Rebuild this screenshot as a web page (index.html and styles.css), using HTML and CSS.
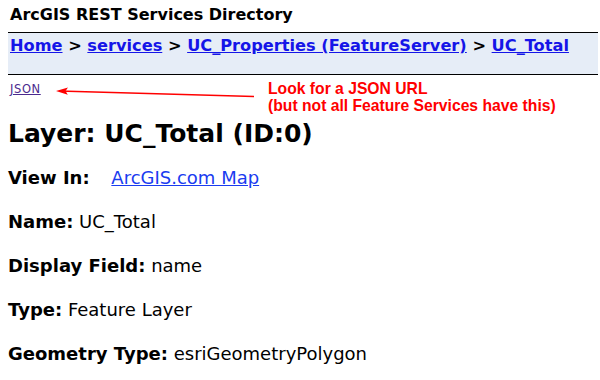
FILE: index.html
```html
<!DOCTYPE html>
<html lang="en">
<head>
  <meta charset="UTF-8">
  <title>Layer: UC_Total (ID:0)</title>
  <link rel="stylesheet" href="styles.css">
</head>
<body>
  <div class="titlebar">ArcGIS REST Services Directory</div>

  <!-- breadcrumbs -->
  <div class="breadcrumbs">
    <a href="#">Home</a> &gt; <a href="#">services</a> &gt; <a href="#">UC_Properties (FeatureServer)</a> &gt; <a href="#">UC_Total</a>
  </div>

  <div class="formats">
    <a class="json" href="#">JSON</a>
    <!-- annotation -->
    <div class="callout">
      <svg class="arrow" width="198" height="14" viewBox="0 0 198 14">
        <line x1="3" y1="4" x2="198" y2="9.5" stroke="#f00" stroke-width="1.3"/>
        <path d="M0 4 L12 0.6 L9.5 4.1 L11.8 7.8 Z" fill="#f00"/>
      </svg>
      <div class="note">Look for a JSON URL<br>(but not all Feature Services have this)</div>
    </div>
  </div>

  <h2>Layer: UC_Total (ID:0)</h2>

  <div class="rbody">
    <p><b>View In:</b> <a class="viewer" href="#">ArcGIS.com Map</a></p>
    <p><b>Name:</b> UC_Total</p>
    <p><b>Display Field:</b> name</p>
    <p><b>Type:</b> Feature Layer</p>
    <p><b>Geometry Type:</b> esriGeometryPolygon</p>
  </div>
</body>
</html>
```

FILE: styles.css
```css
body {
  margin: 0;
  padding: 0 2px 0 8px;
  background-color: #FFF;
  color: #000;
  font-family: "DejaVu Sans", Verdana, sans-serif;
}

a {
  color: #0000EE;
}

.titlebar {
  height: 32px;
  padding-left: 2px;
  font-size: 16px;
  font-weight: bold;
  line-height: 30px;
}

.breadcrumbs {
  height: 43px;
  padding: 3px 2px 0;
  box-sizing: border-box;
  border-top: 1px solid #000;
  border-bottom: 1px solid #000;
  background-color: #E6EDF7;
  font-size: 16.2px;
  font-weight: bold;
  line-height: 20px;
}

.breadcrumbs a {
  color: #1515E8;
}

.formats {
  position: relative;
  height: 28px;
  padding-left: 2px;
}

.json {
  font-size: 11.5px;
  letter-spacing: 0.6px;
  line-height: 28px;
  color: #4B2A8E;
}

.callout {
  position: absolute;
  left: 48px;
  top: 5px;
  display: flex;
  align-items: flex-start;
}

.arrow {
  margin-top: 7px;
  overflow: visible;
}

.note {
  margin-left: 14px;
  color: #F00;
  font-family: "Liberation Sans", Arial, sans-serif;
  font-size: 15.7px;
  font-weight: bold;
  line-height: 17px;
}

h2 {
  margin: 14px 0 0;
  font-size: 25px;
  line-height: 34px;
}

.rbody {
  margin-top: 5px;
}

.rbody p {
  margin: 0;
  font-size: 18px;
  line-height: 44px;
}

.rbody .viewer {
  margin-left: 16px;
  color: #1A3CF0;
}
```
